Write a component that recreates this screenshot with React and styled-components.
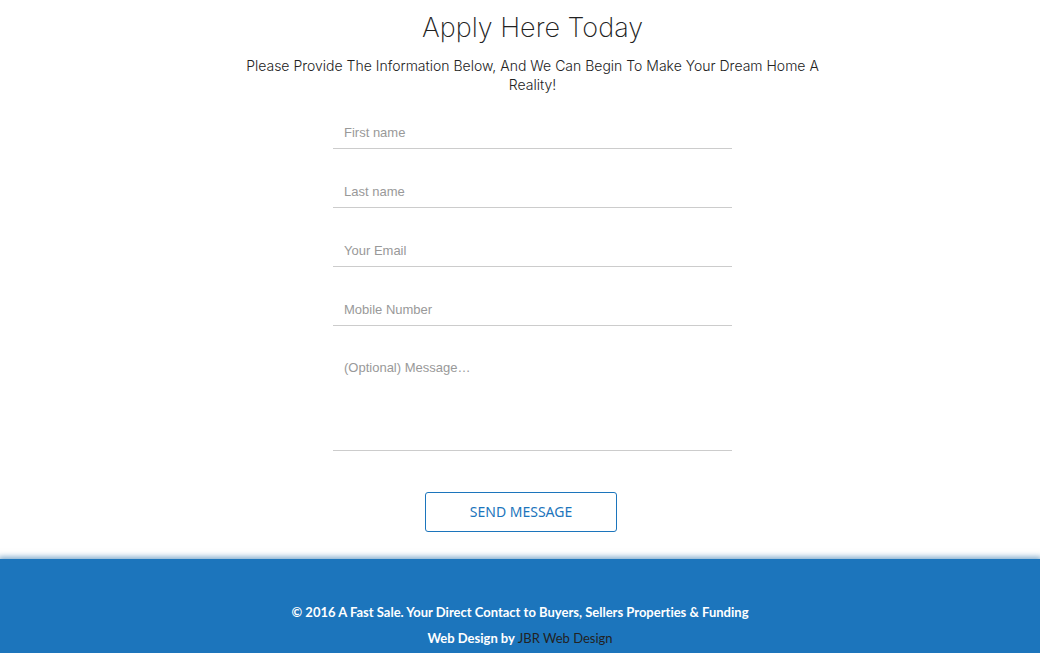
import React from "react";
import styled, { createGlobalStyle, css } from "styled-components";

const GlobalStyle = createGlobalStyle`
  *, *::before, *::after { box-sizing: border-box; }
  body {
    margin: 0;
    background: #fff;
    color: #222;
    font-family: Inter, "Liberation Sans", sans-serif;
  }
`;

const Intro = styled.header`
  padding: 9px 0 0 25px;
  text-align: center;
`;

const Title = styled.h2`
  margin: 0;
  font-size: 27px;
  line-height: 38px;
  font-weight: 200;
`;

const Lead = styled.p`
  max-width: 585px;
  margin: 9px auto 0;
  font-size: 14px;
  line-height: 19px;
  font-weight: 300;
`;

const Form = styled.form`
  display: flex;
  flex-direction: column;
  align-items: center;
  padding: 21px 0 27px;
`;

const Fields = styled.div`
  display: flex;
  flex-direction: column;
  align-items: center;
  gap: 25px;
  width: 100%;
  padding-left: 25px;
`;

const fieldStyle = css`
  display: block;
  width: 100%;
  max-width: 399px;
  border: 0;
  border-bottom: 1px solid #ccc;
  border-radius: 0;
  background: transparent;
  color: #333;
  font-family: "Liberation Sans", Arial, sans-serif;
  font-size: 13px;
  line-height: 18px;
  outline: none;

  &::placeholder { color: #999; opacity: 1; }
`;

const Input = styled.input`
  ${fieldStyle}
  height: 34px;
  padding: 2px 11px 0;
`;

const TextArea = styled.textarea`
  ${fieldStyle}
  height: 100px;
  padding: 8px 11px;
  resize: none;
`;

const SubmitButton = styled.button`
  width: 192px;
  height: 40px;
  margin: 41px 0 0 2px;
  padding: 0 0 2px;
  border: 1px solid #1c75bc;
  border-radius: 3px;
  background: #fff;
  color: #1c75bc;
  font-family: "Noto Sans", sans-serif;
  font-size: 14px;
  font-weight: 400;
  text-transform: uppercase;
  cursor: pointer;
`;

const Footer = styled.footer`
  padding: 40px 0 3px;
  background: #1c75bc;
  box-shadow: 0 0 6px 2px rgba(28, 105, 165, 0.6);
  color: #fff;
  font-family: Lato, "Liberation Sans", sans-serif;
  font-variant-ligatures: none;
  text-align: center;
`;

const FooterLine = styled.p`
  margin: 0;
  font-size: 13px;
  line-height: 26px;
  font-weight: 700;
`;

const FooterLink = styled.a`
  color: #222;
  font-weight: 400;
  text-decoration: none;
`;

const fields = [
  { name: "firstName", type: "text", label: "First name" },
  { name: "lastName", type: "text", label: "Last name" },
  { name: "email", type: "email", label: "Your Email" },
  { name: "mobile", type: "tel", label: "Mobile Number" },
];

export default function App() {
  return (
    <>
      <GlobalStyle />
      <main>
        <Intro>
          <Title>Apply Here Today</Title>
          <Lead>
            Please Provide The Information Below, And We Can Begin To Make Your Dream Home A Reality!
          </Lead>
        </Intro>
        <Form onSubmit={(e) => e.preventDefault()}>
          <Fields>
            {fields.map((f) => (
              <Input key={f.name} name={f.name} type={f.type} placeholder={f.label} aria-label={f.label} />
            ))}
            <TextArea name="message" placeholder="(Optional) Message…" aria-label="(Optional) Message" />
          </Fields>
          <SubmitButton type="submit">Send Message</SubmitButton>
        </Form>
      </main>
      <Footer>
        <FooterLine>© 2016 A Fast Sale. Your Direct Contact to Buyers, Sellers Properties &amp; Funding</FooterLine>
        <FooterLine>
          Web Design by <FooterLink href="#">JBR Web Design</FooterLink>
        </FooterLine>
      </Footer>
    </>
  );
}
